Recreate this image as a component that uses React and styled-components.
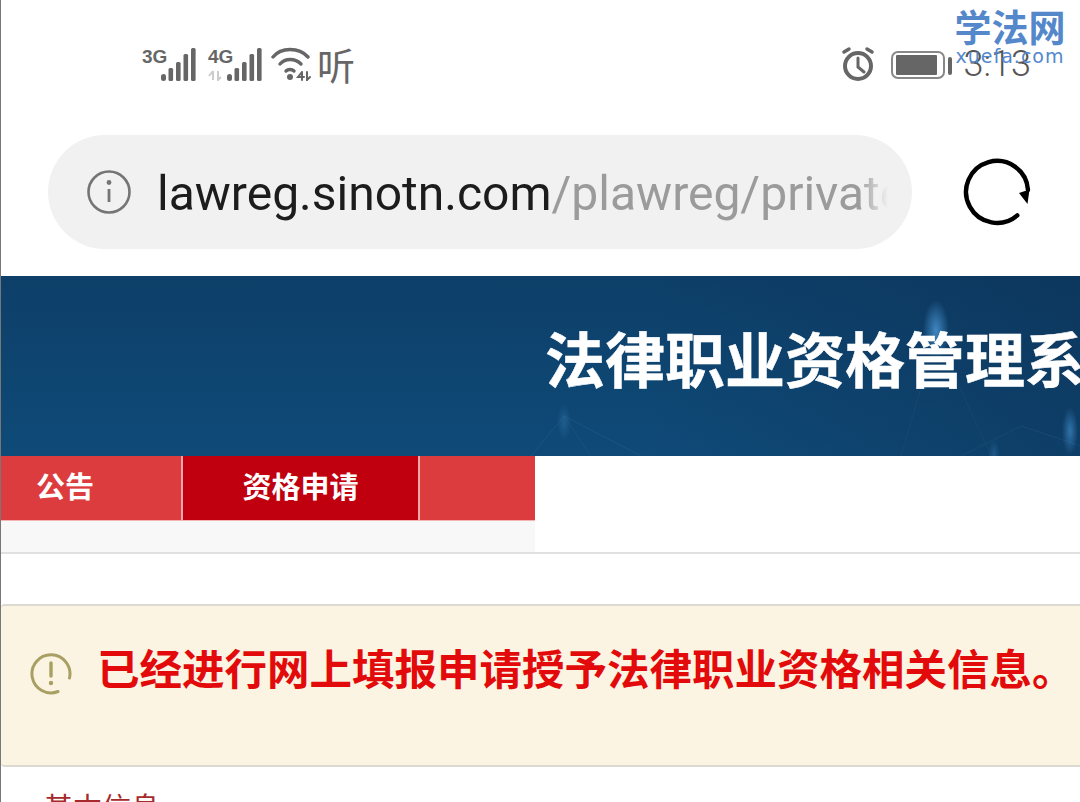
import React from 'react'
import styled, { createGlobalStyle } from 'styled-components'

const GlobalStyle = createGlobalStyle`
html,body{
    margin:0;
    padding:0;
    background:#fff;
}
`

const cjk = `"Noto Sans CJK SC", "Noto Sans", sans-serif`

function SignalBars() {
    return (
        <svg width="35" height="34" viewBox="0 0 35 34" fill="#666">
            <rect x="0" y="27" width="5" height="7" rx="2.5" />
            <rect x="7.5" y="21" width="4.6" height="13" rx="1.5" />
            <rect x="15" y="15" width="4.6" height="19" rx="1.5" />
            <rect x="22.5" y="7" width="4.6" height="27" rx="1.5" />
            <rect x="30" y="1" width="4.6" height="33" rx="1.5" />
        </svg>
    )
}

function DataArrows() {
    return (
        <svg width="14" height="11" viewBox="0 0 14 11" fill="none" stroke="#ccc" strokeWidth="2">
            <path d="M5 1 V10 M5 1 L1 6" />
            <path d="M10 1 V10 L13 7" />
        </svg>
    )
}

function WifiIcon() {
    return (
        <svg width="40" height="34" viewBox="0 0 40 34" fill="none" stroke="#666" strokeWidth="3.4" strokeLinecap="round">
            <path d="M2 10 C 10 0, 28 0, 37 10" />
            <path d="M9 17 C 14 11, 24 11, 30 17" />
            <path d="M15 24 C 17 22, 21 22, 23 24" />
            <circle cx="19" cy="30" r="3" fill="#666" stroke="none" />
            <path d="M31 25 L27 30 H33 M31 25 V33" strokeWidth="2" />
            <path d="M36 25 V33 L39 30" strokeWidth="2" />
        </svg>
    )
}

function AlarmIcon() {
    return (
        <svg width="34" height="36" viewBox="0 0 34 36" fill="none" stroke="#666" strokeLinecap="round">
            <circle cx="17" cy="20" r="13" strokeWidth="4" />
            <path d="M17 12 V21 L23 26" strokeWidth="3" />
            <path d="M3 6 L8 3" strokeWidth="3.5" />
            <path d="M31 6 L26 3" strokeWidth="3.5" />
        </svg>
    )
}

function BatteryIcon() {
    return (
        <svg width="62" height="32" viewBox="0 0 62 32" fill="none">
            <rect x="1" y="4" width="52" height="26" rx="6" stroke="#888" strokeWidth="2" />
            <rect x="5" y="7" width="41" height="20" rx="1" fill="#666" />
            <rect x="57" y="9" width="4" height="18" rx="2" fill="#666" />
        </svg>
    )
}

function InfoIcon() {
    return (
        <svg width="46" height="46" viewBox="0 0 46 46" fill="none" stroke="#757575">
            <circle cx="23" cy="23" r="20.5" strokeWidth="2.6" />
            <circle cx="23" cy="13.5" r="2.4" fill="#757575" stroke="none" />
            <path d="M23 20 V33" strokeWidth="2.8" />
        </svg>
    )
}

function ReloadIcon() {
    return (
        <svg width="70" height="70" viewBox="0 0 70 70" fill="none" stroke="#000" strokeWidth="4.4" strokeLinecap="round">
            <path d="M55.3 58.4 A 31 31 0 1 1 66 33" />
            <path d="M57 36 L 67.5 32.5 L 65.5 47 Z" fill="#000" stroke="none" />
        </svg>
    )
}

function WarnIcon() {
    return (
        <svg width="42" height="42" viewBox="0 0 42 42" fill="none" stroke="#a89f63" strokeLinecap="round">
            <path d="M28 38.5 A 19 19 0 1 1 39.5 25" strokeWidth="3" />
            <path d="M21 10 V23" strokeWidth="3.4" />
            <circle cx="21" cy="30" r="2.2" fill="#a89f63" stroke="none" />
        </svg>
    )
}

function BannerLines() {
    return (
        <svg width="1080" height="180" viewBox="0 0 1080 180" fill="none" stroke="#6fa8d8" strokeWidth="1">
            <path d="M530 180 L563 140 L640 180" opacity=".12" />
            <path d="M563 140 L590 180" opacity=".1" />
            <path d="M935 60 L900 180 M935 60 L990 180" opacity=".07" />
            <path d="M960 180 L1020 150 L1080 170" opacity=".1" />
        </svg>
    )
}

function App() {
    return (
        <Page>
            <GlobalStyle />
            <StatusBar>
                <StatusLeft>
                    <NetCell>
                        <NetLabel>3G</NetLabel>
                    </NetCell>
                    <SignalBars />
                    <NetCell $second>
                        <NetLabel>4G</NetLabel>
                        <DataArrows />
                    </NetCell>
                    <SignalBars />
                    <WifiSlot><WifiIcon /></WifiSlot>
                    <SpeedGlyph>听</SpeedGlyph>
                </StatusLeft>
                <StatusRight>
                    <AlarmIcon />
                    <BatteryIcon />
                    <Clock>3:13</Clock>
                </StatusRight>
            </StatusBar>

            <AddressRow>
                <AddressPill>
                    <InfoIcon />
                    <Url>
                        lawreg.sinotn.com<UrlPath>/plawreg/private/apply</UrlPath>
                    </Url>
                </AddressPill>
                <ReloadIcon />
            </AddressRow>

            <Banner>
                <LinesLayer><BannerLines /></LinesLayer>
                <BannerTitle>法律职业资格管理系统</BannerTitle>
            </Banner>

            <NavArea>
                <NavBlock>
                    <Nav>
                        <NavItem $w={182}>公告</NavItem>
                        <NavItem $w={237} $active>资格申请</NavItem>
                        <NavItem $w={115} $last />
                    </Nav>
                </NavBlock>
            </NavArea>

            <Alert>
                <WarnIcon />
                <AlertText>已经进行网上填报申请授予法律职业资格相关信息。</AlertText>
            </Alert>

            <SectionTitle>基本信息</SectionTitle>

            <Watermark>
                <WatermarkName>学法网</WatermarkName>
                <WatermarkUrl>xuefa.com</WatermarkUrl>
            </Watermark>
        </Page>
    )
}

const Page = styled.div`
position:relative;
width:1080px;
height:802px;
box-sizing:border-box;
overflow:hidden;
background:#fff;
border-left:1px solid #777;
font-family:${cjk};
`
const StatusBar = styled.div`
height:135px;
box-sizing:border-box;
padding:44px 49px 0 141px;
display:flex;
justify-content:space-between;
align-items:flex-start;
`
const StatusLeft = styled.div`
display:flex;
align-items:center;
height:40px;
svg{
    flex-shrink:0;
}
`
const StatusRight = styled.div`
display:flex;
align-items:center;
gap:16px;
height:40px;
svg{
    flex-shrink:0;
}
`
const NetCell = styled.div`
width:19px;
height:34px;
margin-left:${props => props.$second ? '12px' : '0'};
display:flex;
flex-direction:column;
justify-content:space-between;
`
const NetLabel = styled.span`
font-family:"Liberation Sans Narrow", "Liberation Sans", sans-serif;
font-weight:700;
font-size:19px;
line-height:19px;
color:#666;
`
const WifiSlot = styled.div`
margin-left:9px;
display:flex;
`
const SpeedGlyph = styled.span`
font-size:38px;
line-height:40px;
font-weight:400;
color:#666;
margin-left:6px;
`
const Clock = styled.span`
font-family:Roboto, sans-serif;
font-weight:300;
font-size:36px;
line-height:40px;
color:#555;
margin-left:-5px;
`
const AddressRow = styled.div`
display:flex;
align-items:center;
gap:50px;
padding-left:47px;
height:114px;
margin-bottom:27px;
`
const AddressPill = styled.div`
width:864px;
height:114px;
flex-shrink:0;
box-sizing:border-box;
padding-left:38px;
display:flex;
align-items:center;
gap:25px;
background:#f1f1f1;
border-radius:57px;
`
const Url = styled.div`
width:731px;
margin-top:2px;
overflow:hidden;
white-space:nowrap;
font-family:Roboto, sans-serif;
font-size:48px;
color:#1c1c1c;
mask-image:linear-gradient(90deg, #000 96%, transparent 100%);
`
const UrlPath = styled.span`
color:#9b9b9b;
`
const Banner = styled.div`
position:relative;
height:180px;
box-sizing:border-box;
padding-left:544px;
display:flex;
align-items:center;
overflow:hidden;
background:
    radial-gradient(ellipse 13px 30px at 935px 54px, rgba(80,160,225,.75), transparent),
    radial-gradient(ellipse 8px 24px at 1069px 155px, rgba(70,150,215,.6), transparent),
    radial-gradient(ellipse 7px 18px at 563px 146px, rgba(70,140,200,.3), transparent),
    radial-gradient(ellipse 6px 14px at 993px 178px, rgba(70,140,200,.3), transparent),
    linear-gradient(90deg, transparent 60%, rgba(12,40,72,.35) 100%),
    linear-gradient(180deg, #0d3f69 0%, #0e4672 60%, #0f4a78 100%);
`
const LinesLayer = styled.div`
position:absolute;
top:0;
left:0;
`
const BannerTitle = styled.h1`
position:relative;
margin:0 0 18px;
font-size:60px;
line-height:1.2;
font-weight:700;
color:#fff;
white-space:nowrap;
-webkit-text-stroke:.5px #fff;
`
const NavArea = styled.div`
height:98px;
box-sizing:border-box;
border-bottom:2px solid #e0e0e0;
`
const NavBlock = styled.div`
width:534px;
height:96px;
background:#f8f8f8;
`
const Nav = styled.div`
display:flex;
height:65px;
box-sizing:border-box;
border-bottom:1px solid #f4b4b4;
`
const NavItem = styled.div`
width:${props => props.$w}px;
box-sizing:border-box;
padding-bottom:7px;
display:flex;
align-items:center;
justify-content:${props => props.$active ? 'center' : 'flex-start'};
padding-left:${props => props.$active ? '0' : '35px'};
background:${props => props.$active ? '#c0000f' : '#dc3c3e'};
border-right:${props => props.$last ? 'none' : '2px solid #f0a8a8'};
color:#fff;
font-size:29px;
font-weight:700;
`
const Alert = styled.div`
margin-top:50px;
height:163px;
box-sizing:border-box;
display:flex;
align-items:flex-start;
gap:25px;
padding:28px 0 0 29px;
background:#fbf4e2;
border-top:2px solid #dcd9d0;
border-bottom:2px solid #dcd9d0;
border-top-left-radius:4px;
border-bottom-left-radius:4px;
svg{
    margin-top:19px;
    flex-shrink:0;
}
`
const AlertText = styled.div`
font-size:42.5px;
line-height:72px;
font-weight:700;
color:#e20a0a;
white-space:nowrap;
margin-top:-3px;
`
const SectionTitle = styled.div`
margin:19px 0 0 43px;
font-size:29px;
line-height:40px;
color:#a62a2c;
`
const Watermark = styled.div`
position:absolute;
top:4px;
right:14px;
width:112px;
display:flex;
flex-direction:column;
align-items:center;
color:#5488cb;
`
const WatermarkName = styled.div`
font-size:37px;
line-height:44px;
font-weight:700;
white-space:nowrap;
`
const WatermarkUrl = styled.div`
font-family:"DejaVu Sans", sans-serif;
font-size:19px;
line-height:22px;
letter-spacing:1px;
white-space:nowrap;
margin-top:-3px;
`

export default App
